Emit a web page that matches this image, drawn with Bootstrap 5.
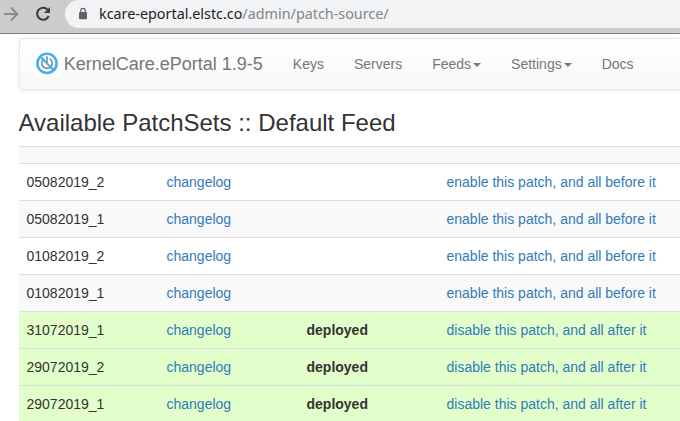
<!DOCTYPE html>
<html lang="en">
<head>
<meta charset="utf-8">
<meta name="viewport" content="width=device-width, initial-scale=1">
<title>KernelCare.ePortal</title>
<link href="https://cdn.jsdelivr.net/npm/bootstrap@5.3.0/dist/css/bootstrap.min.css" rel="stylesheet">
<style>
body{font:14px/20px "Liberation Sans",Arial,sans-serif;color:#333;background:#fff;height:421px}
.browser-bar{height:34px;background:#ccc;border-bottom:1px solid #817f82}
.omnibox{height:28px;margin-left:14px;padding-left:13px;background:#f1f3f4;border-radius:14px 0 0 14px;font:14.35px/28px "Noto Sans",sans-serif;color:#202124}
.omnibox .url{margin-left:11px;white-space:nowrap}
.omnibox .path{color:#80868b}
.page{margin-left:18.5px}
.portal-nav{height:52px;margin-top:4px;border:1px solid #e7e7e7;border-right:0;border-radius:4px 0 0 4px;background:linear-gradient(#fff,#f8f8f8);box-shadow:inset 0 1px 0 rgba(255,255,255,.15),0 1px 5px rgba(0,0,0,.075)}
.portal-nav .navbar-brand{font-size:18px;line-height:20px;color:#777;margin:0 15px 0 15.5px}
.portal-nav .brand-mark{margin-right:4.7px}
.portal-nav .navbar-nav .nav-link{color:#777;padding:15px;line-height:20px}
.portal-nav .dropdown-toggle::after{border-top:4px solid;border-right:4px solid transparent;border-left:4px solid transparent;margin-left:2px;vertical-align:middle}
.page h1{font-size:24px;line-height:26px;font-weight:400;margin:20px 0 10px}
.patches{table-layout:fixed;color:#333;border-color:#ddd}
.patches td{padding:8px;line-height:20px;border-top:1px solid #ddd;border-bottom:0;background:#fff;box-shadow:none;color:#333;white-space:nowrap}
.patches tr:nth-child(odd) td{background:#f9f9f9}
.patches tr.live td{background:#e2ffcb}
.patches a{color:#337ab7;text-decoration:none}
</style>
<script src="https://cdn.jsdelivr.net/npm/bootstrap@5.3.0/dist/js/bootstrap.bundle.min.js"></script>
</head>
<body class="overflow-hidden">
<div class="browser-bar d-flex align-items-start overflow-hidden">
  <svg width="51" height="28" viewBox="0 0 51 28" fill="none" class="flex-shrink-0">
    <path d="M4 14H17M11 7.5L17.3 14L11 20.5" stroke="#8b8b8b" stroke-width="1.9"/>
    <path d="M47.6 9.7A6 6 0 1 0 48.7 16" stroke="#3c3c3c" stroke-width="2.1"/>
    <path d="M50 7V13H44Z" fill="#3c3c3c"/>
  </svg>
  <div class="omnibox d-flex flex-grow-1">
    <svg width="10" height="28" viewBox="0 0 10 28" class="flex-shrink-0"><rect x="1" y="12" width="8" height="7.2" rx="1" fill="#5f6368"/><path d="M2.8 12V10.5a2.2 2.2 0 0 1 4.4 0V12" fill="none" stroke="#5f6368" stroke-width="1.2"/></svg>
    <span class="url">kcare-eportal.elstc.co<span class="path">/admin/patch-source/</span></span>
  </div>
</div>
<div class="page">
  <nav class="portal-nav navbar navbar-expand p-0">
    <a class="navbar-brand d-flex align-items-center p-0" href="#">
      <svg width="24" height="24" viewBox="0 0 24 24" fill="none" class="brand-mark"><path fill="#fff" d="M0 0h24v24H0z"/><path d="M9.4 6.6A5.2 5.2 0 1 0 14.6 6.6M12 4.2V11" stroke="#777" stroke-width="1.4"/><circle cx="12" cy="11.4" r="9.6" stroke="#3eb1ee" stroke-width="2.6"/><path d="M5.2 4.6L18.8 18.2" stroke="#3eb1ee" stroke-width="2.1"/></svg>
      <span>KernelCare.ePortal 1.9-5</span>
    </a>
    <div class="navbar-nav">
      <a class="nav-link" href="#">Keys</a>
      <a class="nav-link" href="#">Servers</a>
      <a class="nav-link dropdown-toggle" href="#" data-bs-toggle="dropdown">Feeds</a>
      <a class="nav-link dropdown-toggle" href="#" data-bs-toggle="dropdown">Settings</a>
      <a class="nav-link" href="#">Docs</a>
    </div>
  </nav>
  <h1>Available PatchSets :: Default Feed</h1>
  <table class="patches table mb-0">
    <colgroup><col style="width:140px"><col style="width:140px"><col style="width:140px"><col></colgroup>
    <tbody>
      <tr><td></td><td></td><td></td><td></td></tr>
      <tr><td>05082019_2</td><td><a href="#">changelog</a></td><td></td><td><a href="#">enable this patch, and all before it</a></td></tr>
      <tr><td>05082019_1</td><td><a href="#">changelog</a></td><td></td><td><a href="#">enable this patch, and all before it</a></td></tr>
      <tr><td>01082019_2</td><td><a href="#">changelog</a></td><td></td><td><a href="#">enable this patch, and all before it</a></td></tr>
      <tr><td>01082019_1</td><td><a href="#">changelog</a></td><td></td><td><a href="#">enable this patch, and all before it</a></td></tr>
      <tr class="live"><td>31072019_1</td><td><a href="#">changelog</a></td><td><b>deployed</b></td><td><a href="#">disable this patch, and all after it</a></td></tr>
      <tr class="live"><td>29072019_2</td><td><a href="#">changelog</a></td><td><b>deployed</b></td><td><a href="#">disable this patch, and all after it</a></td></tr>
      <tr class="live"><td>29072019_1</td><td><a href="#">changelog</a></td><td><b>deployed</b></td><td><a href="#">disable this patch, and all after it</a></td></tr>
    </tbody>
  </table>
</div>
</body>
</html>
